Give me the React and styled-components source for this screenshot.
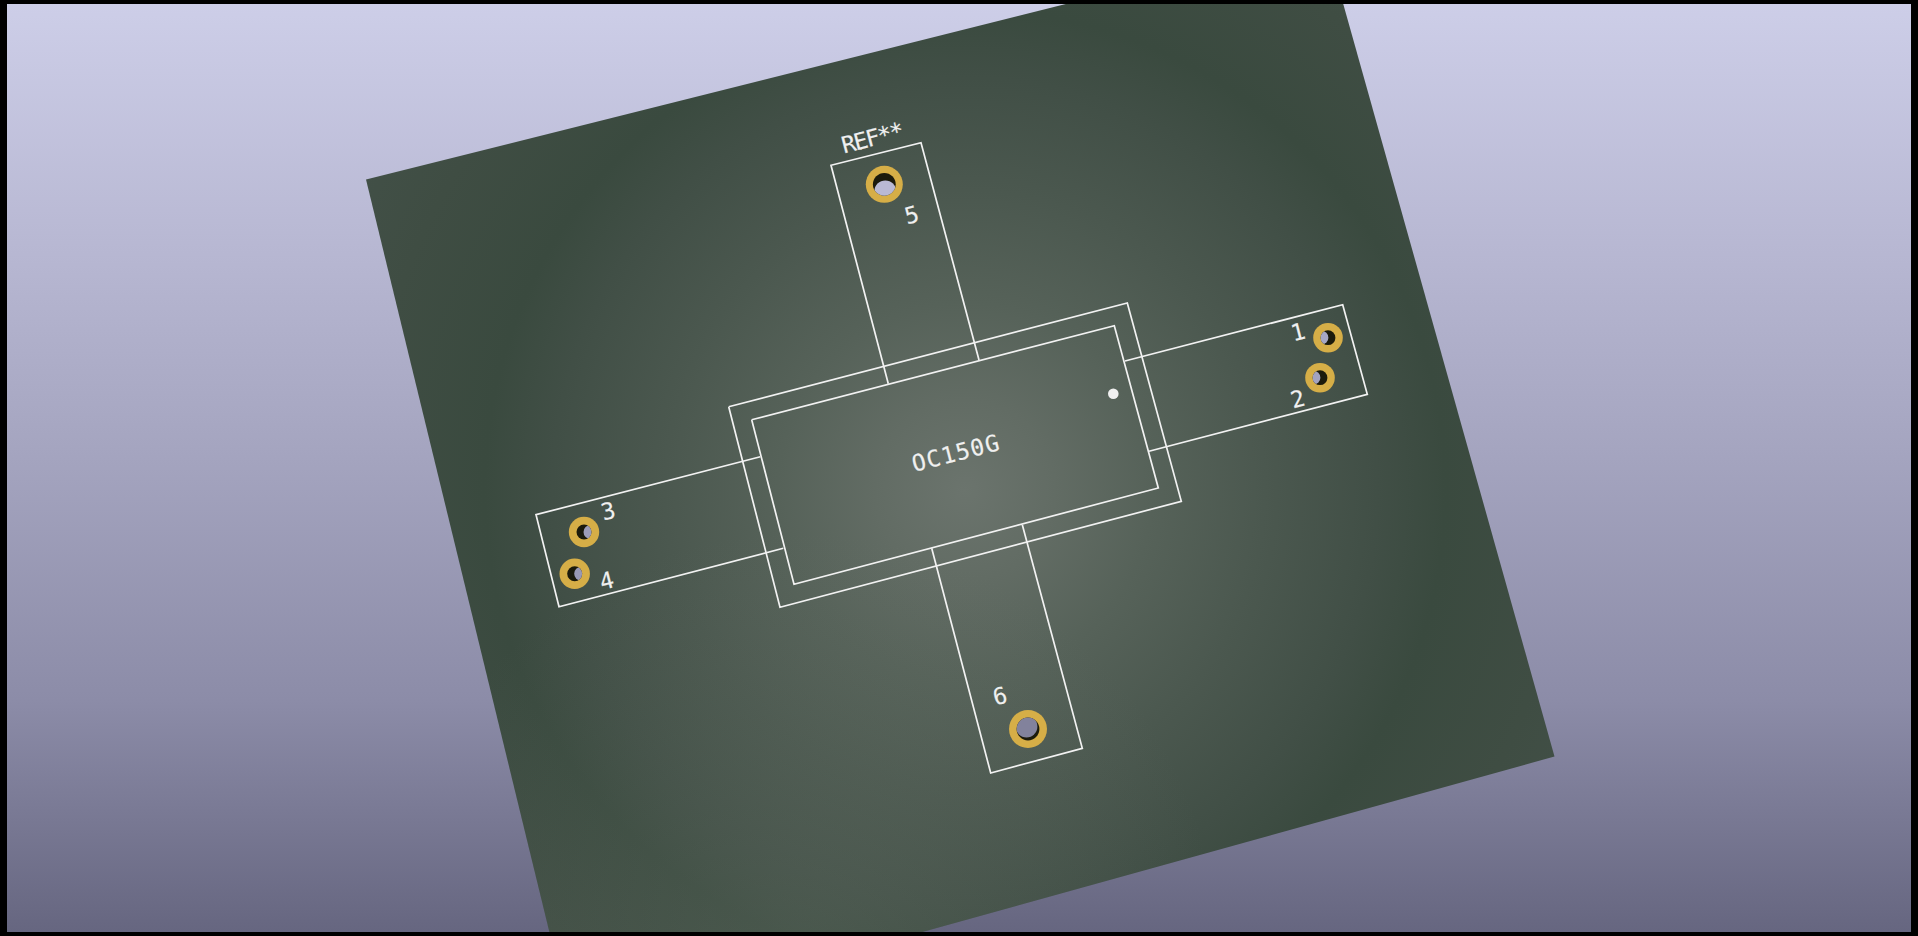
import * as React from 'react';
import styled, { createGlobalStyle } from 'styled-components';

// all coordinates are page pixels, the svg viewBox starts at the frame offset
const board = '366,179.5 1325,-61 1554.5,756.5 573,1029';

const outline = [
    '728.7,406.7 1127.3,303 1181.3,501.3 780,607.3 728.7,406.7',
    '751.7,419.7 1114.3,325.7 1158.3,488 794,584.3 751.7,419.7',
    '888.3,383.7 831,165.3 921,142.7 979,360',
    '1125,361 1342.7,304.7 1367.3,394.3 1149,451.3',
    '760.3,456.7 536,514.7 559,606.7 783.3,548.3',
    '931.7,548.3 990.7,773 1082.3,748.3 1022.3,524.7',
];

const pads = [
    { id: 5, x: 884.3, y: 184.3, r: 18.5, hole: 11.4, dx: 1, dy: 7, see: '#b9b9d4' },
    { id: 1, x: 1328, y: 337.7, r: 14.8, hole: 7.4, dx: -6.5, dy: 0, see: '#a7a7c4' },
    { id: 2, x: 1320, y: 377.7, r: 14.8, hole: 7.4, dx: -6.5, dy: 0, see: '#a3a3c0' },
    { id: 3, x: 584, y: 532, r: 15.2, hole: 7.5, dx: 6.5, dy: 0, see: '#9c9cb8' },
    { id: 4, x: 574.7, y: 573.7, r: 15.2, hole: 7.5, dx: 6.5, dy: 0, see: '#9898b4' },
    { id: 6, x: 1028, y: 729, r: 19, hole: 11.4, dx: -1.5, dy: -2.5, see: '#82829c' },
];

const labels = [
    { text: 'REF**', x: 872, y: 138, spacing: -1.5 },
    { text: 'OC150G', x: 956, y: 453, spacing: 1.2 },
    { text: '1', x: 1298, y: 332 },
    { text: '2', x: 1297.7, y: 399 },
    { text: '3', x: 608.3, y: 511 },
    { text: '4', x: 606.7, y: 580.7 },
    { text: '5', x: 911.7, y: 215 },
    { text: '6', x: 1000, y: 696 },
];

function Pad({ pad }) {
    return (
        <g>
            <clipPath id={'hole' + pad.id}>
                <circle cx={pad.x} cy={pad.y} r={pad.hole} />
            </clipPath>
            <Annulus cx={pad.x} cy={pad.y} r={pad.r} />
            <Bore cx={pad.x} cy={pad.y} r={pad.hole} />
            <circle
                cx={pad.x + pad.dx}
                cy={pad.y + pad.dy}
                r={pad.hole - 0.5}
                fill={pad.see}
                clipPath={`url(#hole${pad.id})`}
            />
        </g>
    );
}

function App() {
    return (
        <Frame>
            <GlobalStyle />
            <Viewport>
                <Scene viewBox="7 4 1904 928">
                    <defs>
                        <radialGradient id="sheen" gradientUnits="userSpaceOnUse" cx="965" cy="490" r="750">
                            <stop offset="0" stopColor="#6b746d" />
                            <stop offset="0.12" stopColor="#626c64" />
                            <stop offset="0.25" stopColor="#566259" />
                            <stop offset="0.4" stopColor="#4b584f" />
                            <stop offset="0.55" stopColor="#414f46" />
                            <stop offset="0.64" stopColor="#3a4a3f" />
                            <stop offset="0.8" stopColor="#3f4d43" />
                            <stop offset="1" stopColor="#44524a" />
                        </radialGradient>
                        <radialGradient id="lowerSheen" gradientUnits="userSpaceOnUse" cx="800" cy="950" r="420">
                            <stop offset="0" stopColor="#6e786e" stopOpacity="0.3" />
                            <stop offset="1" stopColor="#6e786e" stopOpacity="0" />
                        </radialGradient>
                    </defs>
                    <polygon points={board} fill="url(#sheen)" />
                    <polygon points={board} fill="url(#lowerSheen)" />
                    {outline.map((points, i) => <Silk key={i} points={points} />)}
                    {pads.map(pad => <Pad key={pad.id} pad={pad} />)}
                    <Marker cx="1113.3" cy="393.7" r="5.3" />
                    {labels.map(label => (
                        <Label
                            key={label.text}
                            $spacing={label.spacing || 0}
                            transform={`translate(${label.x} ${label.y}) rotate(-14.5)`}
                            textAnchor="middle"
                            dy="8"
                        >
                            {label.text}
                        </Label>
                    ))}
                </Scene>
            </Viewport>
        </Frame>
    );
}

const GlobalStyle = createGlobalStyle`
html, body {
    margin: 0;
    background: #000;
}
`;

const Frame = styled.div`
display: flex;
width: 100vw;
height: 100vh;
box-sizing: border-box;
padding: 4px 7px;
background: #000;
overflow: hidden;
`;

const Viewport = styled.div`
flex: 1;
min-width: 0;
background: linear-gradient(180deg, #cdcee8 0%, #b7b7d2 27%, #a3a3be 50%, #8c8ca8 75%, #666680 100%);
`;

const Scene = styled.svg`
display: block;
width: 100%;
height: 100%;
`;

const Silk = styled.polyline`
fill: none;
stroke: #f2f2f2;
stroke-width: 1.7;
stroke-linejoin: miter;
`;

const Annulus = styled.circle`
fill: #d6ae47;
`;

const Bore = styled.circle`
fill: #1b1a0c;
`;

const Marker = styled.circle`
fill: #f0f0f0;
`;

const Label = styled.text`
font-family: "DejaVu Sans Mono", monospace;
font-size: 23px;
letter-spacing: ${props => props.$spacing}px;
fill: #f0f0f0;
stroke: #f0f0f0;
stroke-width: 0.15;
`;

export default App;
